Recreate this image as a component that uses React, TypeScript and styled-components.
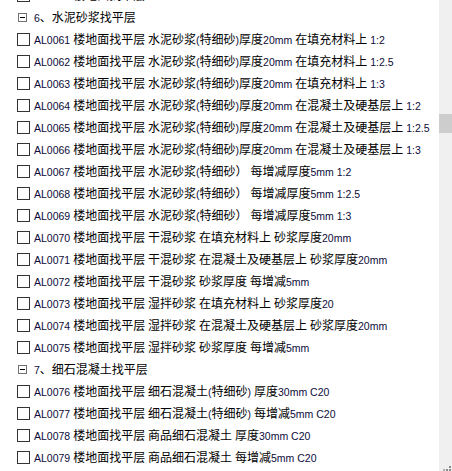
import styled, { createGlobalStyle } from "styled-components";

type Item = { kind: "group" | "item"; label: string };

const items: Item[] = [
  { kind: "item", label: "AL0060 楼地面找平层" },
  { kind: "group", label: "6、水泥砂浆找平层" },
  { kind: "item", label: "AL0061 楼地面找平层 水泥砂浆(特细砂)厚度20mm 在填充材料上 1:2" },
  { kind: "item", label: "AL0062 楼地面找平层 水泥砂浆(特细砂)厚度20mm 在填充材料上 1:2.5" },
  { kind: "item", label: "AL0063 楼地面找平层 水泥砂浆(特细砂)厚度20mm 在填充材料上 1:3" },
  { kind: "item", label: "AL0064 楼地面找平层 水泥砂浆(特细砂)厚度20mm 在混凝土及硬基层上 1:2" },
  { kind: "item", label: "AL0065 楼地面找平层 水泥砂浆(特细砂)厚度20mm 在混凝土及硬基层上 1:2.5" },
  { kind: "item", label: "AL0066 楼地面找平层 水泥砂浆(特细砂)厚度20mm 在混凝土及硬基层上 1:3" },
  { kind: "item", label: "AL0067 楼地面找平层 水泥砂浆(特细砂） 每增减厚度5mm 1:2" },
  { kind: "item", label: "AL0068 楼地面找平层 水泥砂浆(特细砂） 每增减厚度5mm 1:2.5" },
  { kind: "item", label: "AL0069 楼地面找平层 水泥砂浆(特细砂） 每增减厚度5mm 1:3" },
  { kind: "item", label: "AL0070 楼地面找平层 干混砂浆 在填充材料上 砂浆厚度20mm" },
  { kind: "item", label: "AL0071 楼地面找平层 干混砂浆 在混凝土及硬基层上 砂浆厚度20mm" },
  { kind: "item", label: "AL0072 楼地面找平层 干混砂浆 砂浆厚度 每增减5mm" },
  { kind: "item", label: "AL0073 楼地面找平层 湿拌砂浆 在填充材料上 砂浆厚度20" },
  { kind: "item", label: "AL0074 楼地面找平层 湿拌砂浆 在混凝土及硬基层上 砂浆厚度20mm" },
  { kind: "item", label: "AL0075 楼地面找平层 湿拌砂浆 砂浆厚度 每增减5mm" },
  { kind: "group", label: "7、细石混凝土找平层" },
  { kind: "item", label: "AL0076 楼地面找平层 细石混凝土(特细砂) 厚度30mm C20" },
  { kind: "item", label: "AL0077 楼地面找平层 细石混凝土(特细砂) 每增减5mm C20" },
  { kind: "item", label: "AL0078 楼地面找平层 商品细石混凝土 厚度30mm C20" },
  { kind: "item", label: "AL0079 楼地面找平层 商品细石混凝土 每增减5mm C20" },
];

// latin runs are drawn in a smaller face than the chinese text
function renderLabel(label: string) {
  return label.split(/([\x20-\x7e]+)/).map((part, i) =>
    /^[\x20-\x7e]+$/.test(part) ? <Latin key={i}>{part}</Latin> : part
  );
}

const GlobalStyle = createGlobalStyle`
  body {
    margin: 0;
    background: #ffffff;
  }
`;

export default function App() {
  return (
    <>
      <GlobalStyle />
      <Frame>
        <List>
          <Rows>
            {items.map((it, i) => (
              <Row key={i}>
                <Mark>{it.kind === "group" ? <Toggle /> : <Check />}</Mark>
                <Label>{renderLabel(it.label)}</Label>
              </Row>
            ))}
          </Rows>
        </List>
        <Track>
          <Thumb />
          <Grip width="8" height="5" viewBox="0 0 8 5">
            <rect x="6" y="0" width="2" height="2" fill="#8a8a8a" />
            <rect x="3" y="3" width="2" height="2" fill="#8a8a8a" />
            <rect x="6" y="3" width="2" height="2" fill="#8a8a8a" />
            <rect x="0" y="3" width="2" height="2" fill="#b0b0b0" />
          </Grip>
        </Track>
      </Frame>
    </>
  );
}

const Frame = styled.div`
  display: flex;
  width: 452px;
  height: 471px;
  overflow: hidden;
  background: #ffffff;
`;

const List = styled.div`
  flex: 1;
  overflow: hidden;
`;

const Rows = styled.div`
  margin-top: -16px;
  display: flex;
  flex-direction: column;
`;

const Row = styled.div`
  display: flex;
  align-items: center;
  height: 22px;
  padding-left: 17px;
  gap: 4px;
  white-space: nowrap;
`;

const Mark = styled.div`
  width: 13px;
  height: 13px;
  display: flex;
  align-items: center;
  justify-content: flex-start;
  flex: none;
`;

const Check = styled.span`
  display: block;
  box-sizing: border-box;
  width: 13px;
  height: 13px;
  border: 1px solid #333333;
  background: #ffffff;
`;

const Toggle = styled.span`
  position: relative;
  display: block;
  box-sizing: border-box;
  width: 9px;
  height: 9px;
  margin-left: 1px;
  border: 1px solid #707070;
  background: #ffffff;

  &::after {
    content: "";
    position: absolute;
    left: 1px;
    top: 3px;
    width: 5px;
    height: 1px;
    background: #000000;
  }
`;

const Label = styled.span`
  font-family: "Noto Sans CJK SC", sans-serif;
  font-size: 12px;
  line-height: 22px;
  color: #000000;
`;

const Latin = styled.span`
  font-family: "Liberation Sans", "Noto Sans CJK SC", sans-serif;
  font-size: 10.5px;
  color: #0c0c3a;
`;

const Track = styled.div`
  width: 13px;
  flex: none;
  background: #f0f0f0;
  display: flex;
  flex-direction: column;
`;

const Thumb = styled.div`
  margin-top: 114px;
  height: 19px;
  background: #cdcdcd;
`;

const Grip = styled.svg`
  margin-top: auto;
  margin-left: 4px;
`;
